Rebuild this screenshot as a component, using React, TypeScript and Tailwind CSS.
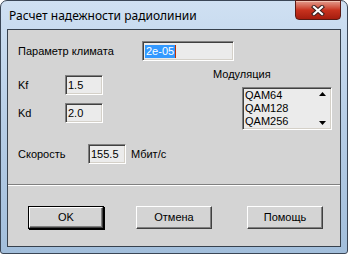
import React from "react";

const sunken =
  "border border-t-[#808080] border-l-[#808080] border-b-white border-r-white shadow-[inset_1px_1px_0_#404040,inset_-1px_-1px_0_#d4d0c8] bg-[#ebebeb]";

function Field({ value, w, selected }: { value: string; w: string; selected?: boolean }) {
  return (
    <div className={`${sunken} ${w} h-[20px] flex items-center pl-[2px] leading-[13px]`}>
      {selected ? (
        <span className="flex items-center">
          <span className="bg-[#3399ff] text-white px-[1px]">{value}</span>
          <span className="w-[1px] h-[13px] bg-[#c03000]" />
        </span>
      ) : (
        <span>{value}</span>
      )}
    </div>
  );
}

function Btn({ label, def }: { label: string; def?: boolean }) {
  const inner = (
    <div className="w-full h-full border border-t-white border-l-white border-b-[#404040] border-r-[#404040] shadow-[inset_-1px_-1px_0_#808080] flex items-center justify-center">
      {label}
    </div>
  );
  return def ? (
    <div className="w-[76px] h-[23px] border border-black shadow-[1px_1px_0_#000]">{inner}</div>
  ) : (
    <div className="w-[76px] h-[23px]">{inner}</div>
  );
}

export default function App() {
  return (
    <div className="w-[348px] h-[254px] bg-white">
      <div
        className="w-[348px] h-[254px] rounded-t-[7px] rounded-b-[3px] border border-[#3a4656] bg-gradient-to-b from-[#cfe0f2] via-[#b6cde6] to-[#a2bedb] flex flex-col"
        style={{ fontFamily: '"Liberation Sans", Arial, sans-serif' }}
      >
        {/* title bar */}
        <div className="h-[28px] flex items-start">
          <div
            className="ml-[8px] mt-[7px] text-[12px] leading-[16px] text-black"
            style={{ fontFamily: '"Noto Sans", "Open Sans", sans-serif' }}
          >
            Расчет надежности радиолинии
          </div>
          <div className="ml-auto mr-[6px] -mt-[1px] w-[46px] h-[20px] rounded-b-[4px] border border-[#5a1a14] bg-gradient-to-b from-[#e29a8c] via-[#c8321e] to-[#a51c0e] flex items-center justify-center shadow-[inset_0_1px_0_#f0c0b0]">
            <svg width="14" height="11" viewBox="0 0 14 11">
              <path d="M3 2 L11 9 M11 2 L3 9" stroke="#3a2020" strokeWidth="4.2" strokeLinecap="square" />
              <path d="M3 2 L11 9 M11 2 L3 9" stroke="#ffffff" strokeWidth="2.2" strokeLinecap="square" />
            </svg>
          </div>
        </div>

        {/* client area */}
        <div className="ml-[6px] w-[334px] h-[218px] border border-[#37414d] bg-[#d4d4d4] text-[11px] text-black flex flex-col">
          {/* row 1 */}
          <div className="flex items-center h-[20px] mt-[11px]">
            <span className="ml-[10px] w-[124px]">Параметр климата</span>
            <Field value="2e-05" w="w-[92px]" selected />
          </div>

          {/* middle */}
          <div className="flex mt-[7px] h-[62px]">
            <div className="w-[205px] pt-[7px] flex flex-col gap-[8px]">
              <div className="flex items-center h-[20px]">
                <span className="ml-[10px] w-[47px]">Kf</span>
                <Field value="1.5" w="w-[38px]" />
              </div>
              <div className="flex items-center h-[20px]">
                <span className="ml-[10px] w-[47px]">Kd</span>
                <Field value="2.0" w="w-[38px]" />
              </div>
            </div>
            <div className="flex flex-col">
              <span className="h-[13px] leading-[13px]">Модуляция</span>
              <div className={`${sunken} ml-[29px] mt-[6px] w-[90px] h-[43px] flex`}>
                <div className="flex-1 pl-[2px] pt-[1px] leading-[13px]">
                  <div>QAM64</div>
                  <div>QAM128</div>
                  <div>QAM256</div>
                </div>
                <div className="w-[15px] flex flex-col justify-between items-center py-[4px] mr-[1px]">
                  <svg width="7" height="4" viewBox="0 0 7 4">
                    <path d="M3.5 0 L7 4 L0 4 Z" fill="#000" />
                  </svg>
                  <svg width="7" height="4" viewBox="0 0 7 4">
                    <path d="M0 0 L7 0 L3.5 4 Z" fill="#000" />
                  </svg>
                </div>
              </div>
            </div>
          </div>

          {/* speed */}
          <div className="flex items-center h-[20px] mt-[14px]">
            <span className="ml-[10px] w-[70px]">Скорость</span>
            <Field value="155.5" w="w-[38px]" />
            <span className="ml-[5px]">Мбит/с</span>
          </div>

          {/* separator */}
          <div className="mt-[20px] h-[2px] border-t border-t-[#808080] border-b border-b-white" />

          {/* buttons */}
          <div className="flex mt-[20px]">
            <div className="ml-[20px]">
              <Btn label="OK" def />
            </div>
            <div className="ml-[32px]">
              <Btn label="Отмена" />
            </div>
            <div className="ml-[35px]">
              <Btn label="Помощь" />
            </div>
          </div>
        </div>
      </div>
    </div>
  );
}
